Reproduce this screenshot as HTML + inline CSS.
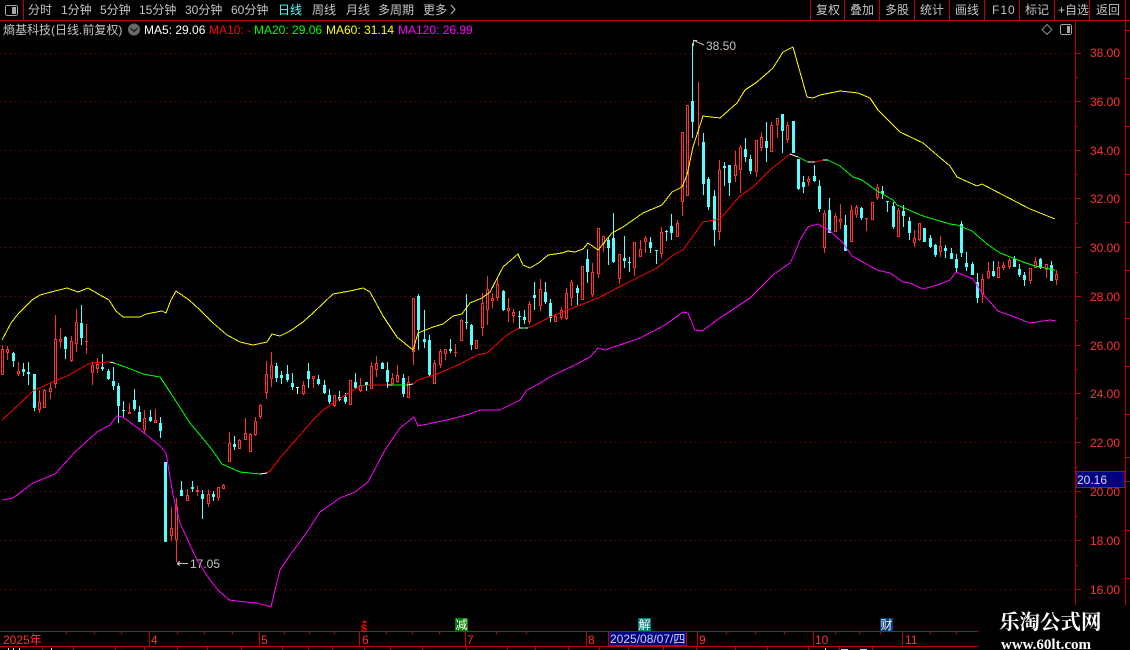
<!DOCTYPE html>
<html><head><meta charset="utf-8"><title>K</title>
<style>
html,body{margin:0;padding:0;background:#000;width:1130px;height:650px;overflow:hidden}
svg{display:block}
text{font-family:"Liberation Sans","WenQuanYi Zen Hei","Noto Sans CJK SC",sans-serif;font-size:12px}
.m{fill:#c4c4c4}
.a{fill:#ff3232}
</style></head><body>
<svg width="1130" height="650" viewBox="0 0 1130 650" xmlns="http://www.w3.org/2000/svg">
<rect width="1130" height="650" fill="#000"/>
<g shape-rendering="crispEdges" fill="none">
<!-- grid -->
<path stroke="#a00000" stroke-dasharray="1 4" d="M0 53.5H1075M0 101.5H1075M0 150.5H1075M0 198.5H1075M0 247.5H1075M0 296.5H1075M0 345.5H1075M0 393.5H1075M0 442.5H1075M0 491.5H1075M0 540.5H1075M0 589.5H1075"/>
<!-- frame -->
<path stroke="#c00000" d="M0 20.5H1130M23.5 0V20M810.5 0V20M844.5 0V20M879.5 0V20M914.5 0V20M949.5 0V20M984.5 0V20M1019.5 0V20M1054.5 0V20M1089.5 0V20M1125.5 0V630M1075.5 20V631"/>
<path stroke="#c00000" d="M1075 53.5H1081M1075 101.5H1081M1075 150.5H1081M1075 198.5H1081M1075 247.5H1081M1075 296.5H1081M1075 345.5H1081M1075 393.5H1081M1075 442.5H1081M1075 491.5H1081M1075 540.5H1081M1075 589.5H1081M1075 77.5H1078M1075 126.5H1078M1075 174.5H1078M1075 223.5H1078M1075 272.5H1078M1075 320.5H1078M1075 369.5H1078M1075 418.5H1078M1075 467.5H1078M1075 516.5H1078M1075 565.5H1078M1075 613.5H1078M1126 30.5H1130M1126 78.5H1130M1126 126.5H1130M1126 174.5H1130M1126 222.5H1130M1126 270.5H1130M1126 318.5H1130M1126 366.5H1130M1126 414.5H1130M1126 457.5H1130M1126 481.5H1130M1126 530.5H1130M1126 578.5H1130"/>
<!-- date axis -->
<path stroke="#c00000" d="M0 631.5H978M0 646.5H978M149.5 631V646M259.5 631V646M359.5 631V646M465.5 631V646M586.5 631V646M608.5 631V646M686.5 631V646M697.5 631V646M813.5 631V646M902.5 631V646M66.5 631V634M94.5 631V634M121.5 631V634M177.5 631V634M204.5 631V634M232.5 631V634M284.5 631V634M309.5 631V634M334.5 631V634M386.5 631V634M412.5 631V634M439.5 631V634M496.5 631V634M526.5 631V634M726.5 631V634M755.5 631V634M784.5 631V634M835.5 631V634M859.5 631V634M880.5 631V634M930.5 631V634M956.5 631V634"/>
<path stroke="#c00000" d="M42.5 646V650M73.5 646V650M115.5 646V650M144.5 646V650M177.5 646V650M207.5 646V650M241.5 646V650M282.5 646V650M308.5 646V650M332.5 646V650M364.5 646V650M390.5 646V650M422.5 646V650M466.5 646V650M507.5 646V650M535.5 646V650M568.5 646V650M599.5 646V650M628.5 646V650M663.5 646V650M696.5 646V650M735.5 646V650M767.5 646V650M808.5 646V650M839.5 646V650M872.5 646V650"/>
<path stroke="#ddd" d="M8.5 648V650M13.5 648V650M19.5 648V650M51.5 648V650M825.5 648V650"/>
<path stroke="#54ffff" d="M841 649.5H848M860 649.5H867"/>
<rect x="608.5" y="631.5" width="78" height="14" fill="#000080" stroke="#c00000"/>
<rect x="1076" y="471.5" width="49" height="16" fill="#000080" stroke="#c00000"/>
<rect x="455" y="618" width="13" height="13" fill="#007f00"/>
<rect x="638" y="618" width="13" height="13" fill="#007f7f"/>
<rect x="880" y="618" width="13" height="13" fill="#003f7f"/>

<!-- red wicks -->
<path stroke="#ff3232" d="M2.5 345V374M7.5 346V360M18.5 362V376M39.5 390V413M44.5 389V408M50.5 383V399M55.5 315V388M60.5 328V348M71.5 336V362M76.5 309V352M86.5 324V354M92.5 362V385M97.5 358V373M129.5 403V413M144.5 410V433M155.5 409V423M171.5 507V541M176.5 498V562M187.5 489V500M197.5 486V496M208.5 490V507M218.5 487V501M223.5 484V489M229.5 432V461M239.5 439V449M245.5 418V440M250.5 433V451M255.5 417V436M260.5 404V419M266.5 361V399M271.5 352V387M303.5 381V395M313.5 376V388M334.5 395V407M350.5 380V404M360.5 378V392M371.5 362V389M376.5 356V377M392.5 373V385M397.5 365V383M408.5 376V398M413.5 298V365M434.5 360V383M440.5 349V368M445.5 349V360M455.5 344V357M461.5 319V341M476.5 340V349M482.5 293V336M487.5 276V325M492.5 293V308M497.5 277V301M508.5 298V322M513.5 309V323M529.5 301V324M540.5 279V311M555.5 314V321M561.5 307V320M566.5 288V320M571.5 280V306M582.5 266V299M592.5 263V297M598.5 228V278M603.5 236V252M619.5 254V284M634.5 242V276M640.5 240V257M645.5 236V253M661.5 227V258M677.5 220V236M682.5 132V216M687.5 105V195M698.5 82V146M719.5 160V240M735.5 151V182M740.5 145V193M756.5 140V177M761.5 132V151M771.5 122V152M777.5 118V138M787.5 122V143M808.5 176V186M824.5 210V253M835.5 213V232M840.5 204V229M851.5 205V241M856.5 205V218M866.5 218V231M872.5 202V219M877.5 184V200M898.5 208V236M914.5 230V247M919.5 223V241M940.5 236V257M982.5 274V303M988.5 262V279M998.5 261V277M1003.5 262V270M1009.5 258V269M1030.5 268V284M1035.5 257V267M1046.5 264V278M1056.5 270V285"/>
<!-- red bodies -->
<path stroke="#ff3232" fill="#000" d="M1.5 349.5h2V374.5h-2zM6.5 349.5h2V352.5h-2zM17.5 371.5h2V373.5h-2zM38.5 402.5h2V409.5h-2zM43.5 390.5h2V407.5h-2zM49.5 388.5h2V391.5h-2zM54.5 339.5h2V383.5h-2zM59.5 339.5h2V341.5h-2zM70.5 341.5h2V360.5h-2zM75.5 322.5h2V343.5h-2zM91.5 365.5h2V372.5h-2zM96.5 364.5h2V368.5h-2zM128.5 412.5h2V413.5h-2zM143.5 418.5h2V429.5h-2zM154.5 420.5h2V422.5h-2zM170.5 528.5h2V535.5h-2zM175.5 506.5h2V539.5h-2zM186.5 495.5h2V500.5h-2zM196.5 490.5h2V491.5h-2zM207.5 494.5h2V503.5h-2zM217.5 487.5h2V497.5h-2zM222.5 485.5h2V488.5h-2zM228.5 443.5h2V461.5h-2zM238.5 440.5h2V448.5h-2zM244.5 433.5h2V439.5h-2zM249.5 434.5h2V451.5h-2zM254.5 421.5h2V434.5h-2zM259.5 405.5h2V416.5h-2zM265.5 374.5h2V392.5h-2zM270.5 365.5h2V378.5h-2zM302.5 385.5h2V393.5h-2zM312.5 376.5h2V378.5h-2zM333.5 395.5h2V405.5h-2zM349.5 380.5h2V404.5h-2zM359.5 385.5h2V390.5h-2zM370.5 366.5h2V388.5h-2zM375.5 363.5h2V369.5h-2zM391.5 378.5h2V383.5h-2zM396.5 375.5h2V381.5h-2zM407.5 382.5h2V397.5h-2zM412.5 298.5h2V351.5h-2zM433.5 363.5h2V383.5h-2zM439.5 351.5h2V364.5h-2zM444.5 349.5h2V353.5h-2zM460.5 320.5h2V340.5h-2zM475.5 340.5h2V348.5h-2zM481.5 303.5h2V327.5h-2zM486.5 289.5h2V309.5h-2zM491.5 298.5h2V300.5h-2zM496.5 284.5h2V297.5h-2zM507.5 308.5h2V310.5h-2zM512.5 312.5h2V315.5h-2zM528.5 304.5h2V321.5h-2zM539.5 289.5h2V305.5h-2zM554.5 316.5h2V321.5h-2zM560.5 310.5h2V317.5h-2zM565.5 293.5h2V318.5h-2zM570.5 282.5h2V297.5h-2zM581.5 266.5h2V299.5h-2zM591.5 272.5h2V294.5h-2zM597.5 228.5h2V273.5h-2zM602.5 236.5h2V243.5h-2zM618.5 254.5h2V278.5h-2zM633.5 242.5h2V267.5h-2zM639.5 249.5h2V256.5h-2zM644.5 238.5h2V241.5h-2zM660.5 232.5h2V253.5h-2zM676.5 223.5h2V236.5h-2zM681.5 132.5h2V201.5h-2zM686.5 105.5h2V195.5h-2zM718.5 170.5h2V231.5h-2zM734.5 165.5h2V175.5h-2zM739.5 147.5h2V169.5h-2zM755.5 140.5h2V171.5h-2zM760.5 137.5h2V147.5h-2zM770.5 125.5h2V151.5h-2zM776.5 118.5h2V124.5h-2zM786.5 125.5h2V139.5h-2zM807.5 179.5h2V181.5h-2zM823.5 213.5h2V247.5h-2zM834.5 216.5h2V231.5h-2zM839.5 219.5h2V221.5h-2zM850.5 210.5h2V241.5h-2zM855.5 207.5h2V214.5h-2zM871.5 202.5h2V219.5h-2zM876.5 187.5h2V197.5h-2zM897.5 210.5h2V236.5h-2zM913.5 238.5h2V242.5h-2zM918.5 223.5h2V239.5h-2zM939.5 246.5h2V251.5h-2zM981.5 279.5h2V293.5h-2zM987.5 271.5h2V277.5h-2zM997.5 267.5h2V277.5h-2zM1002.5 265.5h2V267.5h-2zM1008.5 260.5h2V266.5h-2zM1029.5 268.5h2V280.5h-2zM1034.5 261.5h2V267.5h-2zM1045.5 264.5h2V269.5h-2zM1055.5 274.5h2V279.5h-2z"/>
<path stroke="#ff3232" d="M85 341.5h3M454 352.5h3M865 218.5h3"/>
<path stroke="#fff" d="M297.5 387V394M296 387.5h3"/>
<!-- cyan wicks -->
<path stroke="#54ffff" d="M13.5 352V367M23.5 363V376M28.5 362V385M34.5 374V411M65.5 336V359M81.5 305V345M102.5 354V371M108.5 369V380M113.5 367V390M118.5 383V423M123.5 401V417M134.5 389V411M139.5 406V422M150.5 410V422M160.5 417V438M181.5 481V496M192.5 481V492M202.5 490V519M213.5 491V501M234.5 436V450M276.5 363V382M281.5 371V384M287.5 365V382M292.5 373V390M308.5 363V388M318.5 375V385M324.5 380V394M329.5 389V404M339.5 391V401M345.5 393V404M355.5 373V389M366.5 382V391M382.5 362V369M387.5 362V388M403.5 374V397M418.5 294V350M424.5 310V348M429.5 335V377M450.5 339V353M466.5 294V329M471.5 324V350M503.5 290V311M519.5 311V328M524.5 310V324M534.5 282V310M545.5 282V304M550.5 299V322M577.5 285V305M587.5 249V283M608.5 237V265M613.5 213V263M624.5 236V268M629.5 257V272M650.5 237V253M656.5 250V264M666.5 230V241M671.5 214V240M692.5 43V138M703.5 133V195M708.5 177V210M714.5 190V246M724.5 162V186M729.5 165V196M745.5 138V162M750.5 155V174M766.5 122V162M782.5 114V153M798.5 159V190M803.5 176V193M814.5 165V182M819.5 180V212M829.5 198V233M845.5 215V251M861.5 207V220M882.5 186V199M887.5 201V212M893.5 202V229M903.5 205V227M909.5 217V240M930.5 235V248M935.5 244V257M945.5 245V258M951.5 248V259M956.5 254V272M961.5 221V257M966.5 252V271M972.5 262V275M977.5 273V303M993.5 261V277M1014.5 256V267M1019.5 264V277M1024.5 272V286M1040.5 258V269M1051.5 261V281"/>
<!-- cyan bodies -->
<path stroke="#54ffff" stroke-width="3" d="M13.5 353V361M23.5 369V372M28.5 372V374M34.5 374V408M65.5 337V349M81.5 323V338M102.5 367V369M108.5 371V379M113.5 381V386M118.5 386V406M123.5 410V411M134.5 400V409M139.5 412V422M150.5 417V421M160.5 423V431M165.5 462V542M181.5 490V496M192.5 487V489M202.5 494V499M213.5 494V497M234.5 444V447M276.5 366V378M281.5 375V378M287.5 374V380M292.5 383V387M308.5 371V379M318.5 379V384M324.5 385V393M329.5 395V402M339.5 397V400M345.5 397V402M355.5 382V388M366.5 382V385M382.5 363V369M387.5 370V382M403.5 378V394M418.5 296V330M424.5 339V342M429.5 340V375M450.5 349V351M466.5 322V323M471.5 325V345M503.5 291V310M519.5 316V317M524.5 317V320M534.5 295V298M545.5 292V302M550.5 303V318M577.5 288V293M587.5 259V272M608.5 240V248M613.5 238V262M624.5 258V261M629.5 262V263M650.5 242V248M656.5 250V251M666.5 231V232M671.5 226V233M692.5 101V122M703.5 142V184M708.5 179V207M714.5 196V230M724.5 166V168M729.5 165V183M745.5 149V157M750.5 159V171M766.5 141V148M782.5 114V131M793.5 121V153M798.5 159V189M803.5 182V187M814.5 176V181M819.5 186V209M829.5 210V233M845.5 225V251M861.5 208V218M882.5 191V194M887.5 201V202M893.5 206V227M903.5 211V216M909.5 221V233M924.5 228V242M930.5 238V247M935.5 245V255M945.5 248V251M951.5 253V259M956.5 259V268M961.5 224V253M966.5 263V267M972.5 264V275M977.5 282V298M993.5 271V276M1014.5 259V267M1019.5 269V275M1024.5 275V280M1040.5 259V268M1051.5 265V281"/>

<!-- yellow upper -->
<polyline stroke="#ffff00" points="2,340 11,323 18,314 32,300 40,295 55,291 67,288 78,292 88,288 100,295 109,300 116,311 123,317 140,317 146,314 162,311 166,313 171,300 176,291 189,300 200,310 213,323 227,335 240,342 253,345 267,342 272,334 280,336 290,331 303,322 313,313 333,294 350,291 363,288 370,292 383,316 397,337 413,350 418,333 433,327 443,324 453,316 462,314 470,303 482,298 490,292 503,267 518,254 523,265 530,268 540,262 548,255 562,253 568,251 575,252 583,249 588,243 598,250 612,233 623,227 643,213 662,205 672,192 682,187 687,175 693,147 703,116 720,118 737,103 745,90 757,82 773,68 783,52 793,47 807,97 813,98 820,95 840,91 858,93 870,98 878,110 900,132 923,143 937,155 950,166 957,177 977,186 982,184 1003,195 1030,209 1055,219"/>
<!-- magenta lower -->
<polyline stroke="#ff00ff" points="2,500 13,498 33,483 55,474 75,452 97,432 110,425 117,416 123,417 143,432 160,446 166,453 173,495 180,523 197,560 210,580 218,590 229,600 245,602 257,603 271,607 275,590 280,570 290,555 305,535 320,512 340,498 355,492 368,482 385,450 400,428 414,417 418,426 447,420 470,414 480,410 500,410 520,400 527,390 537,385 550,377 560,372 575,365 590,357 598,348 605,350 640,338 665,325 683,312 688,313 695,330 702,331 720,318 750,298 773,275 790,263 794,255 800,240 808,227 818,224 830,231 843,243 852,256 877,270 890,273 903,282 910,283 923,289 937,285 943,283 950,280 956,272 973,279 982,293 998,311 1017,318 1030,323 1050,320 1056,321"/>
<!-- middle -->
<polyline stroke="#ff0000" points="2,420 13,410 33,391 50,383 67,376 90,363 110,362"/>
<polyline stroke="#ffffff" points="110,362 114,363"/>
<polyline stroke="#00ff00" points="114,363 128,368 143,374 160,377 170,392 190,423 210,447 222,464 240,472 260,474"/>
<polyline stroke="#ffffff" points="260,474 267,473"/>
<polyline stroke="#ff0000" points="267,473 270,471 280,458 313,420 323,410 342,397 360,386 370,385 387,385"/>
<polyline stroke="#ffffff" points="387,385 392,385"/>
<polyline stroke="#00ff00" points="392,385 407,385"/>
<polyline stroke="#ffffff" points="407,385 413,384"/>
<polyline stroke="#ff0000" points="413,384 418,380 437,374 460,364 477,355 487,353 507,335 519,328"/>
<polyline stroke="#ffffff" points="519,328 523,328"/>
<polyline stroke="#00ff00" points="523,328 525,328"/>
<polyline stroke="#ffffff" points="525,328 528,328"/>
<polyline stroke="#ff0000" points="528,328 533,326 550,317 570,309 598,298 627,283 657,268 673,255 683,250 703,222 720,219 740,196 753,187 770,170 790,154"/>
<polyline stroke="#ffffff" points="790,154 798,157"/>
<polyline stroke="#00ff00" points="798,157 808,162"/>
<polyline stroke="#ffffff" points="808,162 815,162"/>
<polyline stroke="#ff0000" points="815,162 823,160"/>
<polyline stroke="#ffffff" points="823,160 828,160"/>
<polyline stroke="#00ff00" points="828,160 840,166 853,177 862,180 877,191 893,200 897,205 923,216 950,224 957,225 972,231 987,244 1000,253 1023,262 1035,266 1055,270"/>
<!-- hi / lo marks -->
<path stroke="#c4c4c4" d="M693 40.5h4M693 40l11 5M693.5 40V46M177 563.5H188M177 563.5l3 -2M177 563.5l3 2"/>
<!-- icons -->
<rect x="5.5" y="5.5" width="12" height="10" rx="2" fill="#000" stroke="#a8a8a8"/>
<rect x="12" y="7" width="4" height="7" fill="#a8a8a8"/>
<rect x="1060.5" y="24.5" width="11" height="10" rx="2" fill="#000" stroke="#a8a8a8"/>
<rect x="1067" y="26" width="3" height="7" fill="#a8a8a8"/>
</g>
<path d="M1047 24.5l5 5-5 5-5-5z" fill="none" stroke="#8a8a8a"/>
<circle cx="134" cy="29.5" r="6" fill="#6a6a6a"/>
<path d="M130.5 28l3.5 3.500 3.500-3.500" fill="none" stroke="#1a1a1a" stroke-width="1.300"/>

<!-- menu -->
<g class="m">
<text x="28" y="14" class="m">分时</text>
<text x="61" y="14" class="m">1分钟</text>
<text x="100" y="14" class="m">5分钟</text>
<text x="139" y="14" class="m">15分钟</text>
<text x="185" y="14" class="m">30分钟</text>
<text x="231" y="14" class="m">60分钟</text>
<text x="278" y="14" style="fill:#54ffff">日线</text>
<text x="312" y="14" class="m">周线</text>
<text x="346" y="14" class="m">月线</text>
<text x="378" y="14" class="m">多周期</text>
<text x="423" y="14" class="m">更多</text>
<text x="816" y="14" class="m">复权</text>
<text x="850" y="14" class="m">叠加</text>
<text x="885" y="14" class="m">多股</text>
<text x="920" y="14" class="m">统计</text>
<text x="955" y="14" class="m">画线</text>
<text x="992" y="14" class="m" letter-spacing="1">F10</text>
<text x="1025" y="14" class="m">标记</text>
<text x="1058" y="14" class="m">+自选</text>
<text x="1096" y="14" class="m">返回</text>
<text x="3" y="34" class="m">熵基科技(日线.前复权)</text>
</g>
<path d="M451 5l4 4.500-4 4.500" fill="none" stroke="#c4c4c4"/>
<text x="144" y="34" fill="#fff">MA5: 29.06</text>
<text x="209" y="34" fill="#ff0000">MA10: -</text>
<text x="254" y="34" fill="#00ff00">MA20: 29.06</text>
<text x="326" y="34" fill="#ffff00">MA60: 31.14</text>
<text x="398" y="34" fill="#ff00ff">MA120: 26.99</text>

<!-- price axis -->
<g class="a">
<text x="1090" y="57" class="a">38.00</text>
<text x="1090" y="106" class="a">36.00</text>
<text x="1090" y="155" class="a">34.00</text>
<text x="1090" y="203" class="a">32.00</text>
<text x="1090" y="252" class="a">30.00</text>
<text x="1090" y="301" class="a">28.00</text>
<text x="1090" y="350" class="a">26.00</text>
<text x="1090" y="398" class="a">24.00</text>
<text x="1090" y="447" class="a">22.00</text>
<text x="1090" y="496" class="a">20.00</text>
<text x="1090" y="545" class="a">18.00</text>
<text x="1090" y="594" class="a">16.00</text>
</g>
<text x="1077" y="484" fill="#d8d8e8">20.16</text>
<text x="706" y="50" fill="#c4c4c4">38.50</text>
<text x="190" y="568" fill="#c4c4c4">17.05</text>

<!-- date axis labels -->
<text x="3" y="644" class="a">2025年</text>
<text x="151" y="644" class="a">4</text>
<text x="261" y="644" class="a">5</text>
<text x="362" y="644" class="a">6</text>
<text x="467" y="644" class="a">7</text>
<text x="588" y="644" class="a">8</text>
<text x="699" y="644" class="a">9</text>
<text x="815" y="644" class="a">10</text>
<text x="905" y="644" class="a">11</text>
<text x="610" y="643" fill="#d0d0f0">2025/08/07/四</text>
<!-- events -->
<path d="M364.500 620l2.500 3h-5z" fill="#ff0000"/>
<text x="361" y="632" fill="#ff0000" style="font-weight:bold;font-size:11px">$</text>
<text x="455.500" y="629" fill="#fff">减</text>
<text x="638.500" y="629" fill="#fff">解</text>
<text x="880.500" y="629" fill="#fff">财</text>

<!-- watermark -->
<rect x="978" y="605" width="152" height="45" fill="#000"/>
<text x="999" y="629" fill="#fff" style="font-family:'Liberation Serif','Noto Serif CJK SC',serif;font-size:20.5px;font-weight:bold">乐淘公式网</text>
<text x="1001" y="649" fill="#fff" style="font-family:'Liberation Serif',serif;font-size:15px;font-weight:bold">www.60lt.com</text>
</svg>
</body></html>
